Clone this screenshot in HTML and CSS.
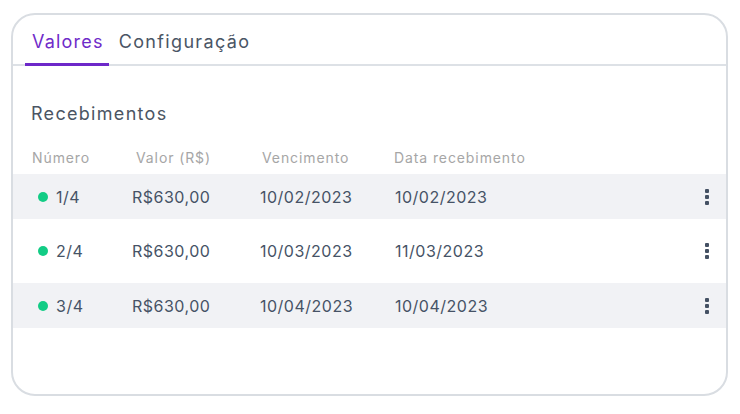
FILE: index.html
```html
<!DOCTYPE html>
<html lang="pt-BR">
<head>
<meta charset="utf-8">
<title>Recebimentos</title>
<link rel="stylesheet" href="styles.css">
</head>
<body>
<div class="card">
  <div class="tabs">
    <div class="tab active">Valores</div>
    <div class="tab">Configuração</div>
  </div>
  <div class="section">
    <h2 class="title">Recebimentos</h2>
    <div class="thead">
      <span>Número</span>
      <span>Valor (R$)</span>
      <span>Vencimento</span>
      <span>Data recebimento</span>
    </div>
    <div class="rows">
      <div class="row striped">
        <span class="num"><i class="dot"></i>1/4</span>
        <span>R$630,00</span>
        <span>10/02/2023</span>
        <span>10/02/2023</span>
        <span class="kebab"><i></i><i></i><i></i></span>
      </div>
      <div class="row">
        <span class="num"><i class="dot"></i>2/4</span>
        <span>R$630,00</span>
        <span>10/03/2023</span>
        <span>11/03/2023</span>
        <span class="kebab"><i></i><i></i><i></i></span>
      </div>
      <div class="row striped">
        <span class="num"><i class="dot"></i>3/4</span>
        <span>R$630,00</span>
        <span>10/04/2023</span>
        <span>10/04/2023</span>
        <span class="kebab"><i></i><i></i><i></i></span>
      </div>
    </div>
  </div>
</div>
</body>
</html>
```

FILE: styles.css
```css
* { box-sizing: border-box; }
html, body { margin: 0; padding: 0; background: #ffffff; }
body {
  font-family: "Inter", "Open Sans", sans-serif;
  color: #475467;
  padding: 13px 0 0 11px;
}
.card {
  width: 717px;
  height: 383px;
  border: 2px solid #d9dde2;
  border-radius: 24px;
  background: #fff;
  overflow: hidden;
}
.tabs {
  display: flex;
  gap: 3px;
  padding: 0 0 0 12px;
  border-bottom: 2px solid #dde1e6;
  height: 51px;
  align-items: flex-end;
}
.tab {
  padding: 0 5px 10px 7px;
  font-size: 18px;
  line-height: 22px;
  color: #4a5565;
  letter-spacing: 1.2px;
  margin-bottom: -2px;
  border-bottom: 3px solid transparent;
}
.tab + .tab { letter-spacing: 1.35px; }
.tab.active {
  color: #6f2bc9;
  border-bottom-color: #6d28c9;
}
.section { padding-top: 37px; }
.title {
  margin: 0 0 24px 18px;
  font-size: 18px;
  font-weight: 400;
  color: #4b5563;
  letter-spacing: 1.3px;
  line-height: 22px;
}
.thead {
  display: grid;
  grid-template-columns: 104px 126px 132px 1fr;
  padding-left: 19px;
  font-size: 14px;
  color: #a6a6a6;
  letter-spacing: 0.9px;
  line-height: 18px;
  margin-bottom: 7px;
}
.rows { display: flex; flex-direction: column; gap: 9.5px; }
.row {
  display: grid;
  grid-template-columns: 94px 128px 135px 1fr 4px;
  align-items: center;
  height: 45px;
  padding: 0 17px 0 25px;
  font-size: 16px;
  letter-spacing: 0.5px;
  color: #465366;
}
.row.striped { background: #f1f2f5; }
.num { display: flex; align-items: center; }
.dot {
  width: 10px; height: 10px; border-radius: 50%;
  background: #12cc85;
  margin-right: 8px;
}
.kebab { display: flex; flex-direction: column; gap: 2px; }
.kebab i {
  display: block; width: 4px; height: 4px; border-radius: 1px;
  background: #445163;
}
```
